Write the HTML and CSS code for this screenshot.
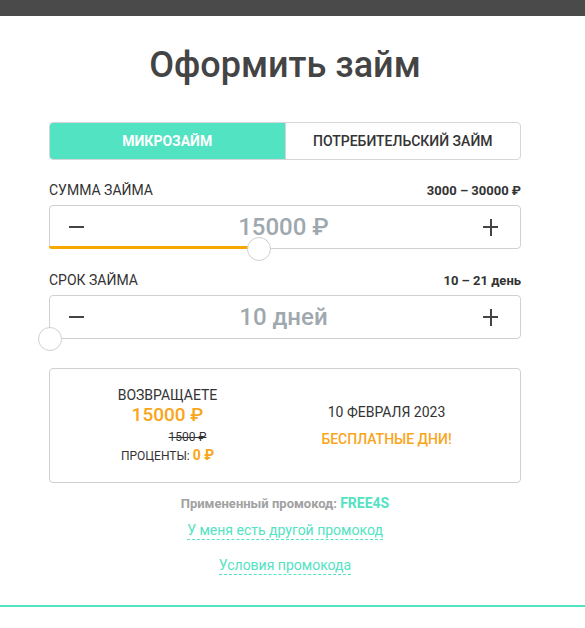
FILE: index.html
```html
<!DOCTYPE html>
<html>
<head>
	<meta charset="utf-8">
	<title>Оформить займ</title>
	<link rel="stylesheet" href="styles.css">
</head>
<body>
<div class="topbar"></div>
<div class="page">
	<h1 class="title">Оформить займ</h1>

	<div class="tabs">
		<a class="tab on" href="javascript:void(0)">МИКРОЗАЙМ</a>
		<a class="tab" href="javascript:void(0)">ПОТРЕБИТЕЛЬСКИЙ ЗАЙМ</a>
	</div>

	<div class="field">
		<div class="field-head">
			<span class="label">СУММА ЗАЙМА</span>
			<span class="range">3000 – 30000 ₽</span>
		</div>
		<div class="stepper">
			<a class="minus" href="javascript:void(0)"></a>
			<span class="value">15000 ₽</span>
			<a class="plus" href="javascript:void(0)"></a>
			<div class="track" style="width: 209px"></div>
			<div class="thumb" style="left: 197px"></div>
		</div>
	</div>

	<div class="field">
		<div class="field-head">
			<span class="label">СРОК ЗАЙМА</span>
			<span class="range">10 – 21 день</span>
		</div>
		<div class="stepper">
			<a class="minus" href="javascript:void(0)"></a>
			<span class="value">10 дней</span>
			<a class="plus" href="javascript:void(0)"></a>
			<div class="thumb" style="left: -12px"></div>
		</div>
	</div>

	<div class="summary">
		<div class="col">
			<div class="caption">ВОЗВРАЩАЕТЕ</div>
			<div class="total">15000 ₽</div>
			<div class="old">1500 ₽</div>
			<div class="percent">ПРОЦЕНТЫ: <b>0 ₽</b></div>
		</div>
		<div class="col">
			<div class="date">10 ФЕВРАЛЯ 2023</div>
			<div class="free">БЕСПЛАТНЫЕ ДНИ!</div>
		</div>
	</div>

	<div class="promo">
		<p class="applied">Примененный промокод: <span>FREE4S</span></p>
		<a class="dashed" href="javascript:void(0)">У меня есть другой промокод</a>
		<a class="dashed" href="javascript:void(0)">Условия промокода</a>
	</div>
</div>
<div class="bottomline"></div>
</body>
</html>
```

FILE: styles.css
```css
* {
	padding: 0px;
	margin: 0px;
	box-sizing: border-box;
}
body {
	font-family: Roboto, "Noto Sans", sans-serif;
	color: #333;
	background: #fff;
}
a {
	text-decoration: none;
}

.topbar {
	height: 16px;
	background: #4a4a4a;
}
.page {
	width: 570px;
	padding: 0 49px;
}
.title {
	font-size: 36px;
	font-weight: 500;
	color: #444;
	text-align: center;
	line-height: 44px;
	padding-top: 27px;
}

/* tabs */
.tabs {
	display: flex;
	margin-top: 35px;
	height: 38px;
	border: 1px solid #d6d6d6;
	border-radius: 4px;
	overflow: hidden;
}
.tab {
	flex: 1;
	display: flex;
	align-items: center;
	justify-content: center;
	font-size: 14px;
	font-weight: 500;
	color: #333;
}
.tab.on {
	background: #52e3c2;
	color: #fff;
	font-weight: 700;
	border-right: 1px solid #d6d6d6;
}

/* fields */
.field {
	margin-top: 22px;
}
.field + .field {
	margin-top: 23px;
}
.field-head {
	display: flex;
	justify-content: space-between;
	align-items: baseline;
	line-height: 16px;
}
.label {
	font-size: 14px;
	color: #333;
}
.range {
	font-size: 13px;
	font-weight: 700;
	color: #333;
}
.stepper {
	position: relative;
	margin-top: 6px;
	height: 44px;
	border: 1px solid #d0d0d0;
	border-radius: 4px;
	display: flex;
	align-items: center;
	justify-content: space-between;
	padding: 0 22px 0 19px;
}
.minus, .plus {
	position: relative;
	width: 15px;
	height: 15px;
}
.minus:before, .plus:before, .plus:after {
	content: '';
	position: absolute;
	background: #444;
}
.minus:before, .plus:before {
	left: 0;
	top: 6px;
	width: 15px;
	height: 2px;
}
.plus:after {
	left: 6.5px;
	top: -1px;
	width: 2px;
	height: 17px;
}
.value {
	font-size: 24px;
	font-weight: 500;
	color: #9ea8ae;
}
.track {
	position: absolute;
	left: -1px;
	bottom: -1px;
	height: 3px;
	background: #f7a800;
	border-bottom-left-radius: 4px;
}
.thumb {
	position: absolute;
	bottom: -13px;
	width: 24px;
	height: 24px;
	border: 1px solid #cfcfcf;
	border-radius: 50%;
	background: #fff;
}

/* summary */
.summary {
	margin-top: 29px;
	height: 115px;
	border: 1px solid #d0d0d0;
	border-radius: 4px;
	display: flex;
	padding: 0 24px 0 8px;
	text-align: center;
}
.summary .col {
	flex: 1;
	display: flex;
	flex-direction: column;
	justify-content: center;
	align-items: center;
}
.caption {
	font-size: 14px;
	line-height: 16px;
	color: #333;
}
.total {
	font-size: 19px;
	font-weight: 500;
	line-height: 24px;
	color: #f9a51a;
}
.old {
	font-size: 12px;
	line-height: 15px;
	margin-top: 3px;
	margin-left: 40px;
	text-decoration: line-through;
	color: #333;
}
.percent {
	margin-top: 1px;
	font-size: 12px;
	line-height: 18px;
	color: #333;
}
.percent b {
	font-size: 14px;
	color: #f9a51a;
}
.date {
	font-size: 14px;
	line-height: 16px;
	color: #333;
}
.free {
	margin-top: 11px;
	font-size: 14px;
	font-weight: 500;
	line-height: 16px;
	color: #f9a51a;
}

/* promo */
.promo {
	margin-top: 12px;
	display: flex;
	flex-direction: column;
	align-items: center;
}
.applied {
	font-size: 13px;
	font-weight: 700;
	color: #a1a1a1;
	line-height: 16px;
}
.applied span {
	font-size: 14px;
	color: #52e3c2;
}
.dashed {
	margin-top: 10px;
	font-size: 14px;
	line-height: 17px;
	color: #52e3c2;
	border-bottom: 1px dashed #52e3c2;
}
.dashed + .dashed {
	margin-top: 17px;
}

.bottomline {
	margin-top: 30px;
	height: 2px;
	background: #52e3c2;
}
```
